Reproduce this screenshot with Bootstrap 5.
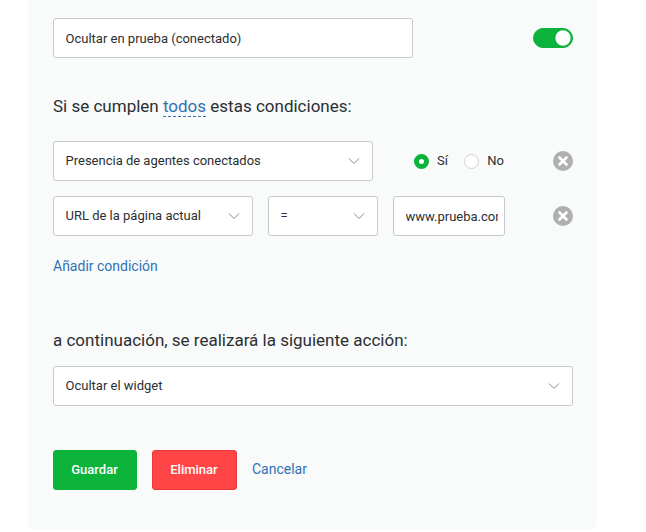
<!DOCTYPE html>
<html lang="es">
  <head>
    <meta charset="UTF-8" />
    <meta name="viewport" content="width=device-width, initial-scale=1.0" />
    <title>Regla de activación</title>
    <link
      href="https://cdn.jsdelivr.net/npm/bootstrap@5.3.3/dist/css/bootstrap.min.css"
      rel="stylesheet"
    />
    <style>
      body {
        font-family: Roboto, "Liberation Sans", sans-serif;
        color: #2b2f33;
        background: #fff;
      }
      .rule-panel {
        width: 569px;
        height: 530px;
        margin-left: 28px;
        padding: 18px 24px 40px 25px;
        background: #f9fafa;
        border-radius: 0 0 8px 8px;
      }
      .rule-field,
      .rule-select {
        height: 40px;
        font-size: 13px;
        color: #2b2f33;
        padding: 0 12px 0 11.5px;
        border: 1px solid #c6cace;
        border-radius: 3px;
        box-shadow: none;
      }
      .rule-select {
        padding-right: 30px;
        background-image: url("data:image/svg+xml,%3csvg xmlns='http://www.w3.org/2000/svg' viewBox='0 0 12 8'%3e%3cpath fill='none' stroke='%23868c92' d='M1 1.5l5 5 5-5'/%3e%3c/svg%3e");
        background-size: 12px 8px;
        background-position: right 12px center;
      }
      .rule-w-name { width: 360px; }
      .rule-w-presence { width: 320px; }
      .rule-w-url { width: 200px; }
      .rule-w-op { width: 110px; }
      .rule-w-value { width: 112px; padding-right: 6px; }
      .rule-switch {
        padding-left: 0;
        min-height: 0;
        margin: 0;
        display: flex;
      }
      .rule-switch.form-switch .form-check-input {
        width: 40px;
        height: 20px;
        margin: 0;
        background-color: #0bb33a;
        border-color: #0bb33a;
        background-image: url("data:image/svg+xml,%3csvg xmlns='http://www.w3.org/2000/svg' viewBox='-4 -4 8 8'%3e%3ccircle r='3.4' fill='%23fff'/%3e%3c/svg%3e");
      }
      .rule-title {
        font-size: 17px;
        line-height: 24px;
        font-weight: 400;
        margin: 0;
      }
      .rule-any {
        color: #2f72b5;
        text-decoration: none;
        border-bottom: 1px dashed #2f72b5;
      }
      .rule-radios {
        width: 90px;
        margin-left: 41px;
        font-size: 13px;
      }
      .rule-radio {
        padding-left: 0;
        margin: 0;
        min-height: 0;
        display: flex;
        align-items: center;
        gap: 8px;
      }
      .rule-radio .form-check-input {
        width: 15px;
        height: 15px;
        margin: 1px 0 0;
        border-color: #cfd3d6;
      }
      .rule-radio .form-check-input:checked {
        background-color: #fff;
        border: 5px solid #0bb33a;
        background-image: none;
      }
      .rule-remove {
        margin-left: auto;
        width: 20px;
        height: 20px;
        flex: none;
        display: block;
      }
      .rule-add {
        display: block;
        font-size: 14px;
        line-height: 20px;
        color: #2f72b5;
        text-decoration: none;
      }
      .rule-btn {
        height: 40px;
        font-size: 13px;
        font-weight: 500;
        color: #fff;
        padding: 0 1px 1px 0;
        border-radius: 3px;
      }
      .rule-save {
        width: 84px;
        background: #0bb33a;
        border: 1px solid #0bb33a;
      }
      .rule-delete {
        width: 85px;
        background: #ff4545;
        border: 1px solid #e83a3a;
      }
      .rule-cancel {
        font-size: 14px;
        line-height: 20px;
        padding-bottom: 2px;
        color: #2f72b5;
        text-decoration: none;
      }
      .rule-gap-heading { margin-top: 36px; }
      .rule-gap-row { margin-top: 23px; }
      .rule-gap-row2 { margin-top: 15px; }
      .rule-gap-add { margin-top: 20px; }
      .rule-gap-heading2 { margin-top: 52px; }
      .rule-gap-select { margin-top: 14px; }
      .rule-gap-actions { margin-top: 44px; }
      .rule-gap-x { gap: 15px; }
    </style>
  </head>
  <body>
    <div class="rule-panel">
      <!-- Name and on/off -->
      <div class="d-flex justify-content-between align-items-center">
        <input class="form-control rule-field rule-w-name" type="text" value="Ocultar en prueba (conectado)" />
        <div class="form-check form-switch rule-switch">
          <input class="form-check-input" type="checkbox" role="switch" checked />
        </div>
      </div>

      <h2 class="rule-title rule-gap-heading">
        Si se cumplen <a class="rule-any" href="#">todos</a> estas condiciones:
      </h2>

      <!-- Conditions -->
      <div class="d-flex align-items-center rule-gap-row">
        <select class="form-select rule-select rule-w-presence">
          <option>Presencia de agentes conectados</option>
        </select>
        <div class="d-flex justify-content-between rule-radios">
          <div class="form-check rule-radio">
            <input class="form-check-input" type="radio" name="presence" id="presenceYes" checked />
            <label class="form-check-label" for="presenceYes">Sí</label>
          </div>
          <div class="form-check rule-radio">
            <input class="form-check-input" type="radio" name="presence" id="presenceNo" />
            <label class="form-check-label" for="presenceNo">No</label>
          </div>
        </div>
        <svg class="rule-remove" viewBox="0 0 20 20" aria-label="Quitar">
          <circle cx="10" cy="10" r="10" fill="#aeb0b2" />
          <path d="M6.5 6.5l7 7M13.5 6.5l-7 7" stroke="#fff" stroke-width="2.6" stroke-linecap="round" />
        </svg>
      </div>
      <div class="d-flex align-items-center rule-gap-x rule-gap-row2">
        <select class="form-select rule-select rule-w-url">
          <option>URL de la página actual</option>
        </select>
        <select class="form-select rule-select rule-w-op">
          <option>=</option>
        </select>
        <input class="form-control rule-field rule-w-value" type="text" value="www.prueba.com" />
        <svg class="rule-remove" viewBox="0 0 20 20" aria-label="Quitar">
          <circle cx="10" cy="10" r="10" fill="#aeb0b2" />
          <path d="M6.5 6.5l7 7M13.5 6.5l-7 7" stroke="#fff" stroke-width="2.6" stroke-linecap="round" />
        </svg>
      </div>
      <a class="rule-add rule-gap-add" href="#">Añadir condición</a>

      <h2 class="rule-title rule-gap-heading2">a continuación, se realizará la siguiente acción:</h2>
      <select class="form-select rule-select rule-gap-select">
        <option>Ocultar el widget</option>
      </select>

      <!-- Actions -->
      <div class="d-flex align-items-center rule-gap-x rule-gap-actions">
        <button type="button" class="btn rule-btn rule-save">Guardar</button>
        <button type="button" class="btn rule-btn rule-delete">Eliminar</button>
        <a class="rule-cancel" href="#">Cancelar</a>
      </div>
    </div>
    <script src="https://cdn.jsdelivr.net/npm/bootstrap@5.3.3/dist/js/bootstrap.bundle.min.js"></script>
  </body>
</html>
